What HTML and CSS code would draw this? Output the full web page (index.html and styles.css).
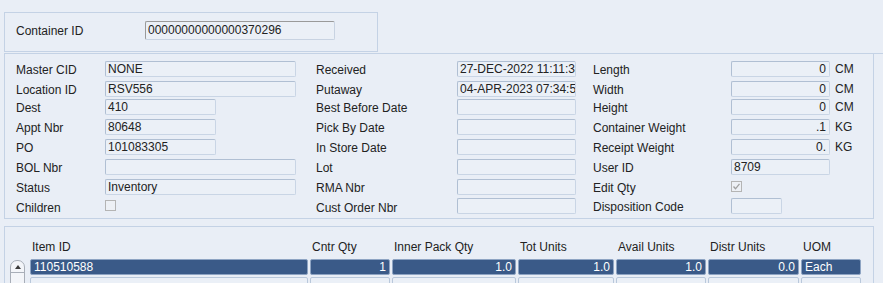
FILE: index.html
```html
<!DOCTYPE html>
<html>
<head>
	<title>Container Inquiry</title>
	<link rel="stylesheet" href="styles.css">
</head>
<body>
	<div class="top-panel">
		<span class="cid-lbl">Container ID</span>
		<div class="cid-fld">00000000000000370296</div>
	</div>

	<div class="detail-wrap">
		<div class="detail">
			<span class="lbl">Master CID</span><div class="fld wide">NONE</div>
			<span class="lbl">Received</span><div class="fld mid">27-DEC-2022 11:11:34</div>
			<span class="lbl">Length</span><div class="fld num">0</div><span class="unit">CM</span>

			<span class="lbl">Location ID</span><div class="fld wide">RSV556</div>
			<span class="lbl">Putaway</span><div class="fld mid">04-APR-2023 07:34:51</div>
			<span class="lbl">Width</span><div class="fld num">0</div><span class="unit">CM</span>

			<span class="lbl">Dest</span><div class="fld short">410</div>
			<span class="lbl">Best Before Date</span><div class="fld mid"></div>
			<span class="lbl">Height</span><div class="fld num">0</div><span class="unit">CM</span>

			<span class="lbl">Appt Nbr</span><div class="fld short">80648</div>
			<span class="lbl">Pick By Date</span><div class="fld mid"></div>
			<span class="lbl">Container Weight</span><div class="fld num">.1</div><span class="unit">KG</span>

			<span class="lbl">PO</span><div class="fld short">101083305</div>
			<span class="lbl">In Store Date</span><div class="fld mid"></div>
			<span class="lbl">Receipt Weight</span><div class="fld num">0.</div><span class="unit">KG</span>

			<span class="lbl">BOL Nbr</span><div class="fld wide"></div>
			<span class="lbl">Lot</span><div class="fld mid"></div>
			<span class="lbl">User ID</span><div class="fld">8709</div><span class="unit"></span>

			<span class="lbl">Status</span><div class="fld wide">Inventory</div>
			<span class="lbl">RMA Nbr</span><div class="fld mid"></div>
			<span class="lbl">Edit Qty</span>
			<div class="chk on">
				<svg width="11" height="11" viewBox="0 0 11 11"><rect x="0.5" y="0.5" width="10" height="10" fill="#edf0f5" stroke="#b4b4b4"/><polyline points="2.5,5.5 4.5,7.8 8.5,2.8" fill="none" stroke="#a0a0a0" stroke-width="1.3"/></svg>
			</div>
			<span class="unit"></span>

			<span class="lbl low">Children</span>
			<div class="chk">
				<svg width="11" height="11" viewBox="0 0 11 11"><rect x="0.5" y="0.5" width="10" height="10" fill="#edf0f5" stroke="#b4b4b4"/></svg>
			</div>
			<span class="lbl low">Cust Order Nbr</span><div class="fld mid"></div>
			<span class="lbl">Disposition Code</span><div class="fld tiny"></div><span class="unit"></span>
		</div>
	</div>

	<div class="items">
		<div class="grid-head">
			<span class="c-item">Item ID</span>
			<span class="c-cntr">Cntr Qty</span>
			<span class="c-inner">Inner Pack Qty</span>
			<span class="c-tot">Tot Units</span>
			<span class="c-avail">Avail Units</span>
			<span class="c-distr">Distr Units</span>
			<span class="c-uom">UOM</span>
		</div>
		<div class="grid-body">
			<div class="scroll">
				<div class="scroll-up"><span class="tri"></span></div>
			</div>
			<div class="rows">
				<div class="row sel">
					<div class="cell c-item">110510588</div>
					<div class="cell c-cntr num">1</div>
					<div class="cell c-inner num">1.0</div>
					<div class="cell c-tot num">1.0</div>
					<div class="cell c-avail num">1.0</div>
					<div class="cell c-distr num">0.0</div>
					<div class="cell c-uom">Each</div>
				</div>
				<div class="row">
					<div class="cell c-item"></div>
					<div class="cell c-cntr"></div>
					<div class="cell c-inner"></div>
					<div class="cell c-tot"></div>
					<div class="cell c-avail"></div>
					<div class="cell c-distr"></div>
					<div class="cell c-uom"></div>
				</div>
			</div>
		</div>
	</div>
</body>
</html>
```

FILE: styles.css
```css
*{
	box-sizing: border-box;
}
body{
	margin: 0;
	padding: 12px 0 0 4px;
	background: #e9eef6;
	font-family: "Liberation Sans", Arial, sans-serif;
	font-size: 12px;
	color: #222;
	overflow: hidden;
}

/* container id box */
.top-panel{
	width: 374px;
	height: 40px;
	border: 1px solid #c4d2e5;
	display: flex;
	align-items: center;
	padding: 8px 0 11px 11px;
}
.cid-lbl{
	width: 129px;
}
.cid-fld{
	width: 190px;
	height: 19px;
	line-height: 17px;
	padding-left: 2px;
	border: 1px solid #c8d3e2;
	border-top-color: #9a9a9a;
	border-left-color: #9a9a9a;
	border-radius: 2px;
	background: #ebf0f7;
}

/* detail block */
.detail-wrap{
	margin-top: 1px;
	border-top: 1px solid #c4d2e5;
}
.detail{
	width: 870px;
	border: 1px solid #c4d2e5;
	border-top: none;
	padding: 7px 0 0 11px;
	display: grid;
	grid-template-columns: 89px 211px 141px 136px 138px 99px auto;
	grid-template-rows: 20px 18px 20px 20px 20px 20px 19px 20px;
}
.lbl{
	line-height: 16px;
	margin-top: 1px;
	white-space: nowrap;
}
.lbl.low{
	margin-top: 2px;
}
.fld{
	height: 16px;
	line-height: 14px;
	padding: 0 2px;
	border: 1px solid #c9d5e5;
	border-top-color: #b0bfd3;
	border-left-color: #b0bfd3;
	border-radius: 2px;
	background: #ebf0f7;
	white-space: nowrap;
	overflow: hidden;
	width: 99px;
}
.fld.wide{
	width: 191px;
}
.fld.short{
	width: 111px;
}
.fld.mid{
	width: 119px;
}
.fld.tiny{
	width: 51px;
}
.fld.num{
	text-align: right;
	padding-right: 3px;
}
.unit{
	padding-left: 5px;
	line-height: 16px;
}
.chk{
	height: 16px;
	padding-top: 2px;
}
.chk svg{
	display: block;
}

/* item grid */
.items{
	width: 870px;
	height: 57px;
	margin-top: 7px;
	border: 1px solid #c4d2e5;
	border-bottom: none;
	padding: 12px 0 0 5px;
	overflow: hidden;
}
.grid-head{
	display: flex;
	gap: 2px;
	margin-left: 20px;
	height: 16px;
	line-height: 16px;
	margin-bottom: 4px;
}
.grid-head span{
	padding-left: 2px;
	white-space: nowrap;
}
.grid-body{
	display: flex;
}
.scroll{
	width: 15px;
	height: 40px;
	margin-top: 1px;
	margin-right: 5px;
	border: 1px solid #a8aeb8;
	border-radius: 7px 7px 0 0;
	background: #f3f5f9;
}
.scroll-up{
	height: 12px;
	border-bottom: 1px solid #a8aeb8;
	display: flex;
	justify-content: center;
	padding-top: 4px;
}
.tri{
	width: 0;
	height: 0;
	border-left: 3.5px solid transparent;
	border-right: 3.5px solid transparent;
	border-bottom: 4px solid #3a3a3a;
}
.rows{
	display: flex;
	flex-direction: column;
	gap: 2px;
}
.row{
	display: flex;
	gap: 2px;
}
.cell{
	height: 16px;
	line-height: 14px;
	padding: 0 3px;
	border: 1px solid #b9c8db;
	border-radius: 2px;
	background: #ebf0f7;
	white-space: nowrap;
}
.cell.num{
	text-align: right;
}
.row.sel .cell{
	background: #3a5a88;
	border-color: #8ea4c3;
	color: #fff;
}
.c-item{ width: 278px; }
.c-cntr{ width: 80px; }
.c-inner{ width: 124px; }
.c-tot{ width: 96px; }
.c-avail{ width: 90px; }
.c-distr{ width: 91px; }
.c-uom{ width: 60px; }
```
